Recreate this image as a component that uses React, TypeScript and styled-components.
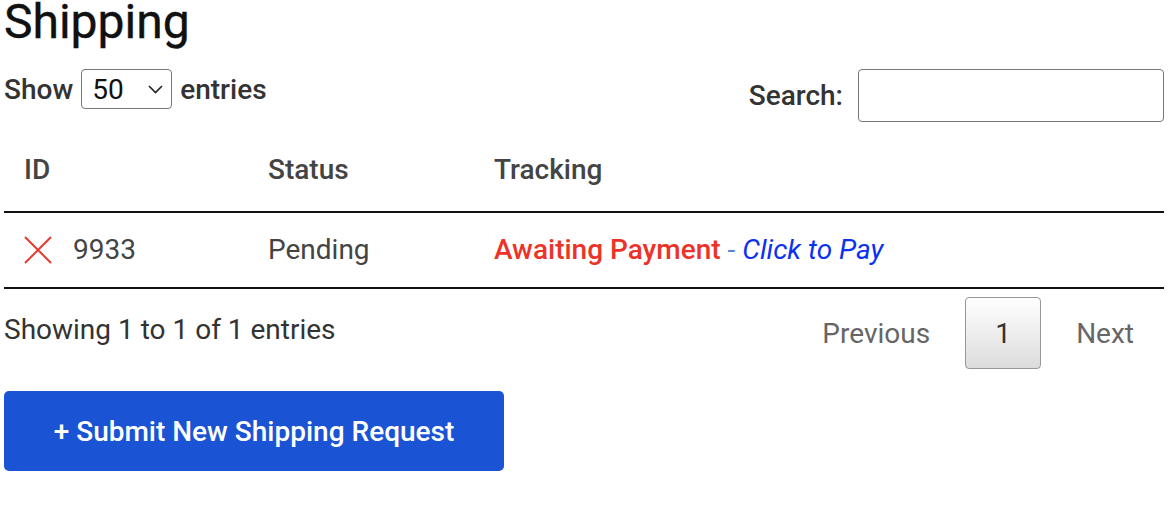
import React from 'react'
import styled, {createGlobalStyle} from 'styled-components'

const GlobalStyle = createGlobalStyle`
  body {
    margin: 0;
    background: #fff;
    font-family: Roboto, "Liberation Sans", sans-serif;
    color: #333;
  }
`

const Page = styled.div`
  padding: 0 8px 0 4px;
`

const Title = styled.h1`
  margin: 0;
  font-size: 48px;
  font-weight: 400;
  line-height: 44px;
  color: #111;
  -webkit-text-stroke: 0.4px #111;
`

const Controls = styled.div`
  display: flex;
  justify-content: space-between;
  align-items: flex-start;
  margin-top: 25px;
`

const Label = styled.label<{gap?: number}>`
  display: flex;
  align-items: center;
  gap: ${p => p.gap || 8}px;
  font-size: 28px;
  font-weight: 500;
  color: #333;
`

const SelectWrap = styled.span`
  position: relative;
  display: inline-flex;
`

const Select = styled.select`
  appearance: none;
  width: 91px;
  height: 40px;
  padding: 0 0 0 10px;
  font-family: inherit;
  font-size: 28px;
  color: #111;
  background: #fff;
  border: 1.5px solid #767676;
  border-radius: 4px;
`

const Chevron = styled.svg`
  position: absolute;
  right: 9px;
  top: 16px;
  pointer-events: none;
`

const SearchInput = styled.input`
  width: 306px;
  height: 53px;
  box-sizing: border-box;
  border: 1.5px solid #767676;
  border-radius: 4px;
  font-size: 28px;
`

const Row = styled.div<{h: number; pt: number}>`
  display: grid;
  grid-template-columns: 244px 226px 1fr;
  border-bottom: 2px solid #111;
  height: ${p => p.h}px;
  box-sizing: border-box;
  padding-top: ${p => p.pt}px;
`

const Cell = styled.div<{head?: boolean}>`
  display: flex;
  align-items: center;
  gap: 21px;
  padding-left: 20px;
  font-size: 28px;
  line-height: 32px;
  height: 32px;
  white-space: nowrap;
  color: #444;
  font-weight: ${p => (p.head ? 500 : 400)};
`

const Awaiting = styled.span`
  color: #ec3328;
  font-weight: 500;
`

const Dash = styled.span`
  color: #5f82cf;
`

const PayLink = styled.a`
  color: #0c32f0;
  font-style: italic;
  text-decoration: none;
`

const Footer = styled.div`
  display: flex;
  justify-content: space-between;
  align-items: flex-start;
`

const Info = styled.div`
  padding-top: 25px;
  font-size: 28px;
  line-height: 32px;
  color: #333;
`

const Pagination = styled.div`
  display: flex;
  align-items: center;
  gap: 35px;
  margin-top: 8px;
  padding-right: 30px;
`

const PageLink = styled.span`
  font-size: 28px;
  color: #666;
`

const PageButton = styled.span`
  width: 76px;
  height: 72px;
  box-sizing: border-box;
  display: flex;
  align-items: center;
  justify-content: center;
  font-size: 28px;
  color: #333;
  border: 1.5px solid #979797;
  border-radius: 4px;
  background: linear-gradient(to bottom, #fff 0%, #dcdcdc 100%);
`

const SubmitButton = styled.button`
  margin-top: 22px;
  width: 500px;
  height: 80px;
  border: none;
  border-radius: 5px;
  background: #1a53d4;
  color: #fff;
  font-family: inherit;
  font-size: 28px;
  font-weight: 500;
`

const CrossIcon = () => (
  <svg width="28" height="28" viewBox="0 0 28 28">
    <path d="M1 1 L27 27 M27 1 L1 27" stroke="#e8392d" strokeWidth="2" fill="none" />
  </svg>
)

export default function App() {
  return (
    <Page>
      <GlobalStyle />
      <Title>Shipping</Title>
      <Controls>
        <Label>
          Show
          <SelectWrap>
            <Select defaultValue="50">
              <option>10</option>
              <option>25</option>
              <option>50</option>
              <option>100</option>
            </Select>
            <Chevron width="15" height="9" viewBox="0 0 15 9">
              <path d="M1 1 L7.5 7.5 L14 1" stroke="#222" strokeWidth="1.6" fill="none" />
            </Chevron>
          </SelectWrap>
          entries
        </Label>
        <Label gap={15} style={{height: 53}}>
          Search:
          <SearchInput type="search" />
        </Label>
      </Controls>
      <Row h={91} pt={32}>
        <Cell head>ID</Cell>
        <Cell head>Status</Cell>
        <Cell head>Tracking</Cell>
      </Row>
      <Row h={76} pt={21}>
        <Cell>
          <CrossIcon />
          9933
        </Cell>
        <Cell>Pending</Cell>
        <Cell>
          <span>
            <Awaiting>Awaiting Payment</Awaiting>
            <Dash> - </Dash>
            <PayLink href="#">Click to Pay</PayLink>
          </span>
        </Cell>
      </Row>
      <Footer>
        <Info>Showing 1 to 1 of 1 entries</Info>
        <Pagination>
          <PageLink>Previous</PageLink>
          <PageButton>1</PageButton>
          <PageLink>Next</PageLink>
        </Pagination>
      </Footer>
      <SubmitButton>+ Submit New Shipping Request</SubmitButton>
    </Page>
  )
}
